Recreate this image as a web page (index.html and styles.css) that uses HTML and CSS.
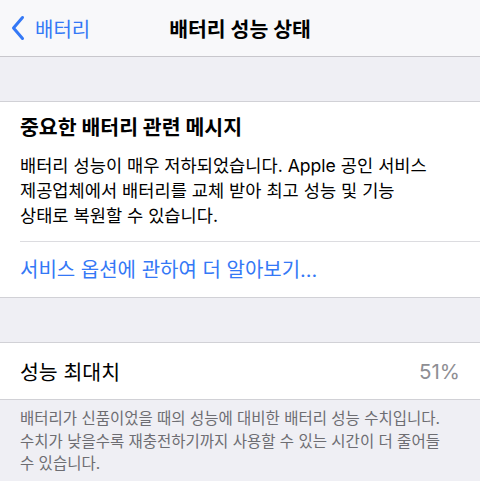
FILE: index.html
```html
<!DOCTYPE html>
<html lang="ko">
<head>
  <meta charset="UTF-8" />
  <meta name="viewport" content="width=device-width, initial-scale=1.0"/>
  <title>배터리 성능 상태</title>
  <link rel="stylesheet" href="styles.css">
</head>
<body>
  <div class="nav">
    <a class="back" href="#">
      <svg class="chevron" viewBox="0 0 14 26" width="14" height="26">
        <path d="M11.5 2.5 L2.5 13 L11.5 23.5" fill="none" stroke="currentColor" stroke-width="3" stroke-linecap="round" stroke-linejoin="round"/>
      </svg>
      <span>배터리</span>
    </a>
    <h1 class="nav-title">배터리 성능 상태</h1>
    <div></div>
  </div>

  <div class="gap"></div>

  <!-- Battery message -->
  <div class="card">
    <div class="card-body">
      <h2>중요한 배터리 관련 메시지</h2>
      <p>배터리 성능이 매우 저하되었습니다. Apple 공인 서비스 제공업체에서 배터리를 교체 받아 최고 성능 및 기능 상태로 복원할 수 있습니다.</p>
    </div>
    <a class="link" href="#">서비스 옵션에 관하여 더 알아보기...</a>
  </div>

  <div class="gap"></div>

  <div class="card">
    <div class="row">
      <span>성능 최대치</span>
      <span class="value">51%</span>
    </div>
  </div>
  <p class="footer">배터리가 신품이었을 때의 성능에 대비한 배터리 성능 수치입니다. 수치가 낮을수록 재충전하기까지 사용할 수 있는 시간이 더 줄어들 수 있습니다.</p>
</body>
</html>
```

FILE: styles.css
```css
:root {
  --blue: #3478f6;
  --bg: #efeff4;
  --nav-bg: #f8f8fa;
  --border: #d1d1d6;
  --text: #000;
  --muted: #6d6d72;
  --value: #8e8e93;
}

* { margin: 0; padding: 0; box-sizing: border-box; }

body {
  font-family: Inter, "Noto Sans CJK KR", sans-serif;
  background: var(--bg);
  color: var(--text);
  width: 480px;
  word-break: keep-all;
}

.nav {
  height: 57px;
  background: var(--nav-bg);
  border-bottom: 1px solid #c8c7cc;
  display: grid;
  grid-template-columns: 1fr auto 1fr;
  align-items: center;
}
.back {
  display: flex; align-items: center; gap: 10px;
  padding-left: 11px;
  color: var(--blue);
  text-decoration: none;
  font-size: 20px;
}
.chevron { display: block; }
.nav-title {
  font-size: 20.5px;
  font-weight: 700;
}

.gap { height: 44px; }

.card {
  background: #fff;
  border-top: 1px solid var(--border);
  border-bottom: 1px solid var(--border);
}
.card-body {
  padding: 14px 20px 13px;
}
.card-body h2 {
  font-size: 20.5px;
  font-weight: 700;
  line-height: 24px;
  margin-bottom: 13px;
}
.card-body p {
  font-size: 17.6px;
  line-height: 25px;
  padding-right: 18px;
}
.link {
  display: block;
  margin-left: 20px;
  border-top: 1px solid #dcdce0;
  padding: 16px 0 15px;
  font-size: 20px;
  line-height: 24px;
  color: var(--blue);
  text-decoration: none;
}

.row {
  height: 56px;
  padding: 0 20px;
  display: flex; align-items: center; justify-content: space-between;
  font-size: 20.5px;
}
.value { color: var(--value); }

.footer {
  padding: 8px 25px 0 20px;
  font-size: 15.5px;
  line-height: 22.5px;
  color: var(--muted);
}
```
